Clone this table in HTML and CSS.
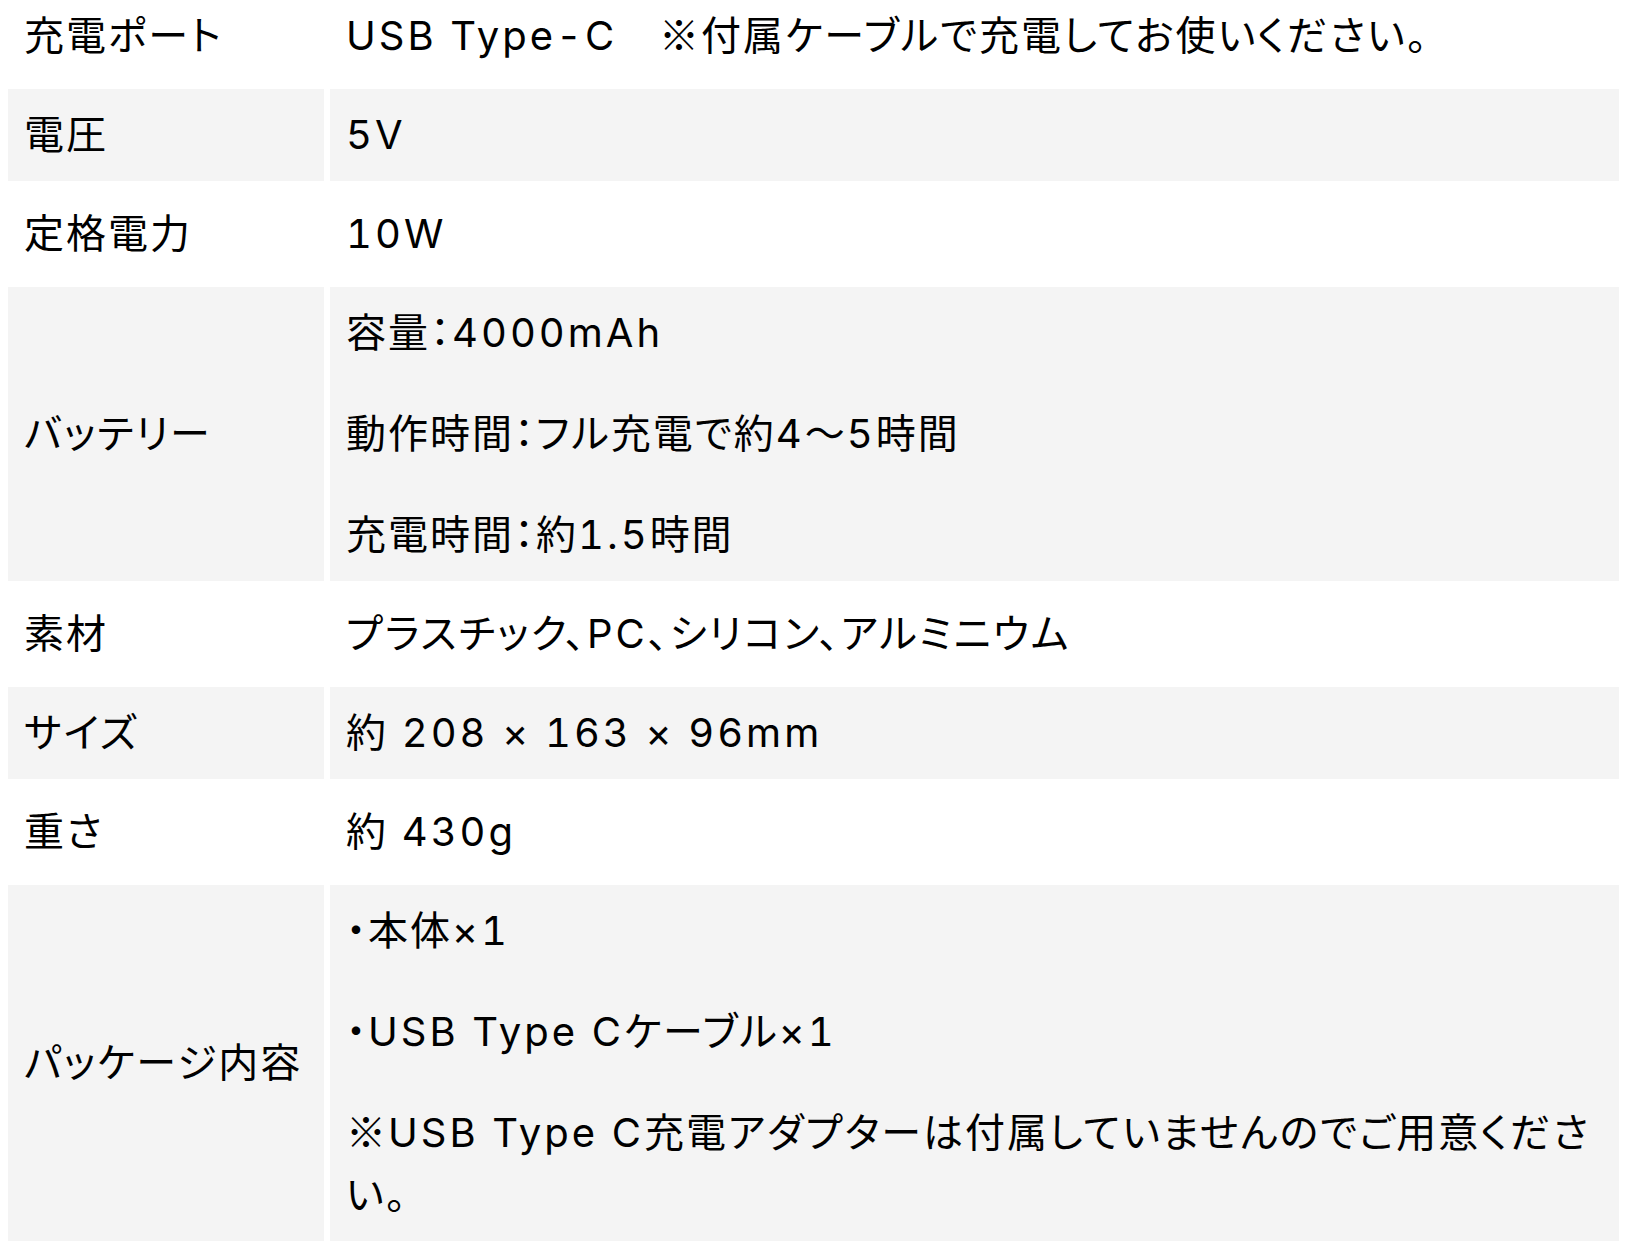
FILE: index.html
```html
<!DOCTYPE html>
<html lang="ja">
<head>
<meta charset="utf-8">
<title>仕様</title>
<link rel="stylesheet" href="styles.css">
</head>
<body>
<dl class="spec">
  <dt class="label">充電ポート</dt>
  <dd class="value"><p><span class="en">USB Type-C</span>　※付属ケーブルで充電してお使いください。</p></dd>

  <dt class="label alt">電圧</dt>
  <dd class="value alt"><p><span class="en">5V</span></p></dd>

  <dt class="label">定格電力</dt>
  <dd class="value"><p><span class="en">10W</span></p></dd>

  <dt class="label alt">バッテリー</dt>
  <dd class="value alt">
    <p>容量：<span class="en">4000mAh</span></p>
    <p>動作時間：フル充電で約<span class="en">4</span>〜<span class="en">5</span>時間</p>
    <p>充電時間：約<span class="en">1.5</span>時間</p>
  </dd>

  <dt class="label">素材</dt>
  <dd class="value"><p>プラスチック、<span class="en">PC</span>、シリコン、アルミニウム</p></dd>

  <dt class="label alt">サイズ</dt>
  <dd class="value alt"><p>約<span class="en"> 208 × 163 × 96mm</span></p></dd>

  <dt class="label">重さ</dt>
  <dd class="value"><p>約<span class="en"> 430g</span></p></dd>

  <dt class="label alt">パッケージ内容</dt>
  <dd class="value alt">
    <p>・本体<span class="en">×1</span></p>
    <p>・<span class="en">USB Type C</span>ケーブル<span class="en">×1</span></p>
    <p>※<span class="en">USB Type C</span>充電アダプターは付属していませんのでご用意ください。</p>
  </dd>
</dl>
</body>
</html>
```

FILE: styles.css
```css
html, body {
  margin: 0;
  padding: 0;
  background: #ffffff;
}

body {
  font-family: "Noto Sans CJK JP", sans-serif;
  font-size: 40px;
  line-height: 62px;
  color: #000000;
  letter-spacing: 2px;
  font-feature-settings: "palt";
}

.en {
  font-family: "Inter", "Noto Sans CJK JP", sans-serif;
  line-height: 40px;
  letter-spacing: 3px;
  font-variant-numeric: tabular-nums;
  font-feature-settings: "tnum";
}

.spec {
  display: grid;
  grid-template-columns: 316px 1fr;
  column-gap: 6px;
  row-gap: 7px;
  margin: -10px 15px 0 8px;
}

.label {
  display: flex;
  align-items: center;
  padding: 12px 16px 18px;
  margin: 0;
}

.value {
  margin: 0;
  padding: 12px 8px 18px 16px;
}

.value p {
  margin: 0;
}

.value p + p {
  margin-top: 39px;
}

.alt {
  background: #f4f4f4;
}
```
